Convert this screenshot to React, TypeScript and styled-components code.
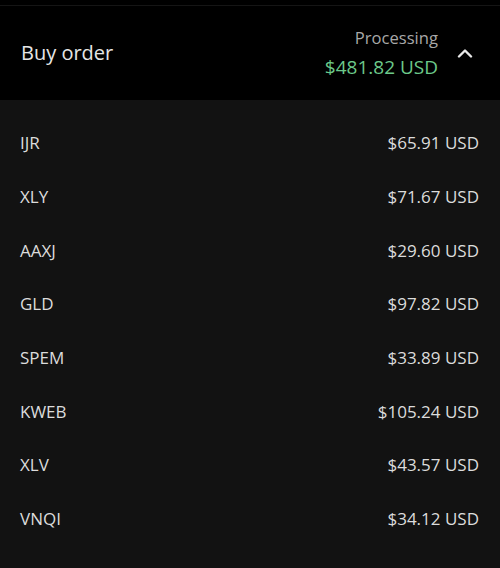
import React from "react";
import styled, { createGlobalStyle } from "styled-components";

const Global = createGlobalStyle`
  html, body { margin: 0; padding: 0; background: #121212; }
  body { font-family: "Open Sans", "Noto Sans", sans-serif; -webkit-font-smoothing: antialiased; }
`;

const Page = styled.div`
  width: 500px;
  height: 568px;
  background: #121212;
  display: flex;
  flex-direction: column;
`;

const TopStrip = styled.div`
  height: 5px;
  background: #000;
  border-bottom: 1px solid #151515;
`;

const Header = styled.header`
  height: 94px;
  box-sizing: border-box;
  background: #000;
  display: flex;
  align-items: center;
  justify-content: space-between;
  padding: 0 27px 0 21px;
`;

const Title = styled.h1`
  margin: 0;
  font-size: 20px;
  font-weight: 400;
  color: #e6e6e6;
  margin-top: -1px;
`;

const Right = styled.div`
  display: flex;
  align-items: center;
  gap: 19px;
`;

const Status = styled.div`
  display: flex;
  flex-direction: column;
  align-items: flex-end;
  gap: 2px;
`;

const StatusLabel = styled.span`
  font-size: 16.6px;
  color: #a8a8a8;
  line-height: 26px;
`;

const Total = styled.span`
  font-size: 19px;
  color: #6cc98a;
  line-height: 28px;
`;

const Toggle = styled.button`
  background: none;
  border: 0;
  padding: 0;
  display: flex;
  color: #e8e8e8;
  cursor: pointer;
  margin-top: 0;
`;

const List = styled.ul`
  list-style: none;
  margin: 0;
  padding: 16px 0 0;
`;

const Row = styled.li`
  height: 53.7px;
  display: flex;
  align-items: center;
  justify-content: space-between;
  padding: 0 21px 0 20px;
  font-size: 17px;
  color: #dcdcdc;
`;

const items: [string, string][] = [
  ["IJR", "$65.91 USD"],
  ["XLY", "$71.67 USD"],
  ["AAXJ", "$29.60 USD"],
  ["GLD", "$97.82 USD"],
  ["SPEM", "$33.89 USD"],
  ["KWEB", "$105.24 USD"],
  ["XLV", "$43.57 USD"],
  ["VNQI", "$34.12 USD"],
];

export default function App() {
  return (
    <Page>
      <Global />
      <TopStrip />
      <Header>
        <Title>Buy order</Title>
        <Right>
          <Status>
            <StatusLabel>Processing</StatusLabel>
            <Total>$481.82 USD</Total>
          </Status>
          <Toggle aria-label="Collapse">
            <svg width="16" height="10" viewBox="0 0 16 10" fill="none">
              <path d="M2 8.5L8 2.5L14 8.5" stroke="currentColor" strokeWidth="2.4" strokeLinecap="round" strokeLinejoin="round" />
            </svg>
          </Toggle>
        </Right>
      </Header>
      <List>
        {items.map(([sym, amt]) => (
          <Row key={sym}>
            <span>{sym}</span>
            <span>{amt}</span>
          </Row>
        ))}
      </List>
    </Page>
  );
}
